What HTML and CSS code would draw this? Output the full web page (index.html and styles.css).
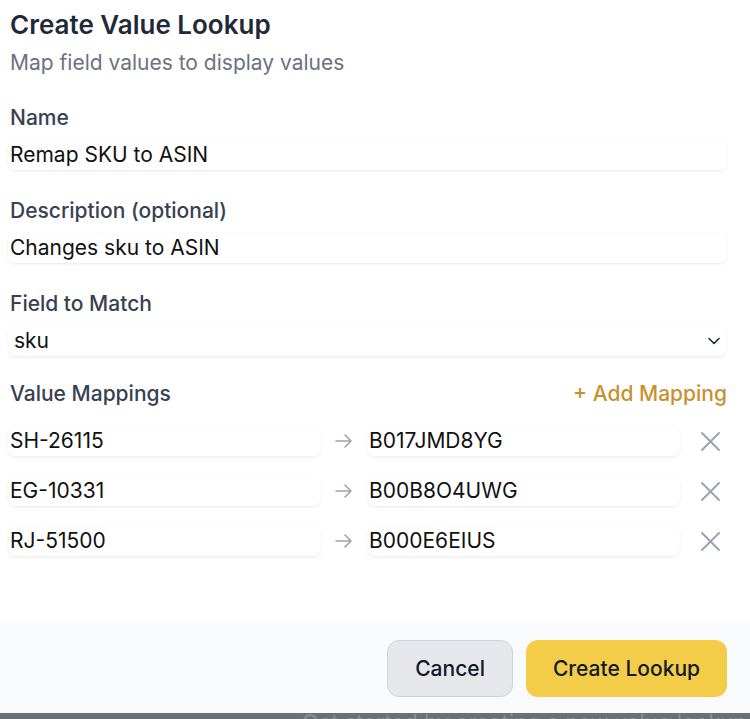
FILE: index.html
```html
<!DOCTYPE html>
<html lang="en">
<head>
  <meta charset="UTF-8" />
  <meta name="viewport" content="width=device-width, initial-scale=1.0"/>
  <title>Create Value Lookup</title>
  <link rel="stylesheet" href="styles.css">
</head>
<body>
  <div class="dialog">
    <div class="dialog-body">
      <h2 class="title">Create Value Lookup</h2>
      <p class="subtitle">Map field values to display values</p>

      <div class="field">
        <label class="label">Name</label>
        <div class="input">Remap SKU to ASIN</div>
      </div>

      <div class="field">
        <label class="label">Description (optional)</label>
        <div class="input">Changes sku to ASIN</div>
      </div>

      <div class="field">
        <label class="label">Field to Match</label>
        <div class="input select">
          <span>sku</span>
          <svg width="14" height="14" viewBox="0 0 14 14"><path d="M2 4.5 L7 9.5 L12 4.5" fill="none" stroke="#1f2937" stroke-width="1.6" stroke-linecap="round" stroke-linejoin="round"/></svg>
        </div>
      </div>

      <div class="mappings-head">
        <span class="label">Value Mappings</span>
        <button class="add-btn">+ Add Mapping</button>
      </div>

      <div class="mappings">
        <div class="input">SH-26115</div>
        <svg class="arrow" width="18" height="16" viewBox="0 0 18 16"><path d="M1 8 H16 M10 2 L16 8 L10 14" fill="none" stroke="#9ca3af" stroke-width="1.6" stroke-linecap="round" stroke-linejoin="round"/></svg>
        <div class="input">B017JMD8YG</div>
        <button class="remove"><svg width="21" height="21" viewBox="0 0 21 21"><path d="M2 2 L19 19 M19 2 L2 19" stroke="#9ca3af" stroke-width="2" stroke-linecap="round"/></svg></button>

        <div class="input">EG-10331</div>
        <svg class="arrow" width="18" height="16" viewBox="0 0 18 16"><path d="M1 8 H16 M10 2 L16 8 L10 14" fill="none" stroke="#9ca3af" stroke-width="1.6" stroke-linecap="round" stroke-linejoin="round"/></svg>
        <div class="input">B00B8O4UWG</div>
        <button class="remove"><svg width="21" height="21" viewBox="0 0 21 21"><path d="M2 2 L19 19 M19 2 L2 19" stroke="#9ca3af" stroke-width="2" stroke-linecap="round"/></svg></button>

        <div class="input">RJ-51500</div>
        <svg class="arrow" width="18" height="16" viewBox="0 0 18 16"><path d="M1 8 H16 M10 2 L16 8 L10 14" fill="none" stroke="#9ca3af" stroke-width="1.6" stroke-linecap="round" stroke-linejoin="round"/></svg>
        <div class="input">B000E6EIUS</div>
        <button class="remove"><svg width="21" height="21" viewBox="0 0 21 21"><path d="M2 2 L19 19 M19 2 L2 19" stroke="#9ca3af" stroke-width="2" stroke-linecap="round"/></svg></button>
      </div>
    </div>

    <div class="dialog-footer">
      <button class="btn btn-cancel">Cancel</button>
      <button class="btn btn-primary">Create Lookup</button>
    </div>
  </div>

  <div class="backdrop-strip">
    <span>Get started by creating a new value lookup</span>
  </div>
</body>
</html>
```

FILE: styles.css
```css
* {
  margin: 0;
  padding: 0;
  box-sizing: border-box;
}

body {
  font-family: Inter, "Noto Sans", sans-serif;
  background: #fff;
  color: #111827;
  overflow: hidden;
}

.dialog {
  background: #fff;
}

.dialog-body {
  padding: 9px 23px 65px 8px;
}

.title {
  font-size: 26px;
  line-height: 32px;
  font-weight: 600;
  color: #1f2937;
  padding-left: 2px;
}

.subtitle {
  margin-top: 8px;
  font-size: 21px;
  line-height: 28px;
  color: #6b7280;
  padding-left: 2px;
}

.field {
  display: flex;
  flex-direction: column;
  gap: 8px;
  margin-top: 27px;
}

.label {
  font-size: 21px;
  line-height: 28px;
  font-weight: 500;
  color: #374151;
  padding-left: 2px;
}

.input {
  height: 30px;
  padding: 0 2px;
  font-size: 21px;
  line-height: 30px;
  color: #111;
  background: #fff;
  border-radius: 8px;
  box-shadow: 0 2px 3px rgba(0, 0, 0, 0.05), 0 0 0 1px rgba(0, 0, 0, 0.015);
}

.select {
  display: flex;
  align-items: center;
  justify-content: space-between;
  padding: 0 6px 0 6px;
}

.mappings-head {
  display: flex;
  justify-content: space-between;
  align-items: center;
  margin-top: 24px;
}

.add-btn {
  background: none;
  border: none;
  font-family: inherit;
  font-size: 21px;
  line-height: 28px;
  font-weight: 500;
  color: #c8912f;
  cursor: pointer;
}

.mappings {
  display: grid;
  grid-template-columns: 1fr 18px 1fr 33px;
  column-gap: 14px;
  row-gap: 20px;
  align-items: center;
  margin-top: 18px;
}

.remove {
  background: none;
  border: none;
  display: flex;
  justify-content: center;
  align-items: center;
  cursor: pointer;
}

.dialog-footer {
  display: flex;
  justify-content: flex-end;
  gap: 13px;
  padding: 19px 23px 16px;
  background: #f9fafb;
}

.btn {
  height: 57px;
  padding: 0 27px;
  border-radius: 12px;
  font-family: inherit;
  font-size: 21px;
  font-weight: 500;
  color: #111827;
  cursor: pointer;
}

.btn-cancel {
  background: #e5e7eb;
  border: 1px solid #cfd4dc;
}

.btn-primary {
  background: #f3cd48;
  border: none;
}

.backdrop-strip {
  height: 7px;
  background: #6b6f76;
  overflow: hidden;
  padding-left: 302px;
}

.backdrop-strip span {
  display: block;
  font-size: 22px;
  line-height: 22px;
  margin-top: -2px;
  color: #8a8e95;
  white-space: nowrap;
}
```
